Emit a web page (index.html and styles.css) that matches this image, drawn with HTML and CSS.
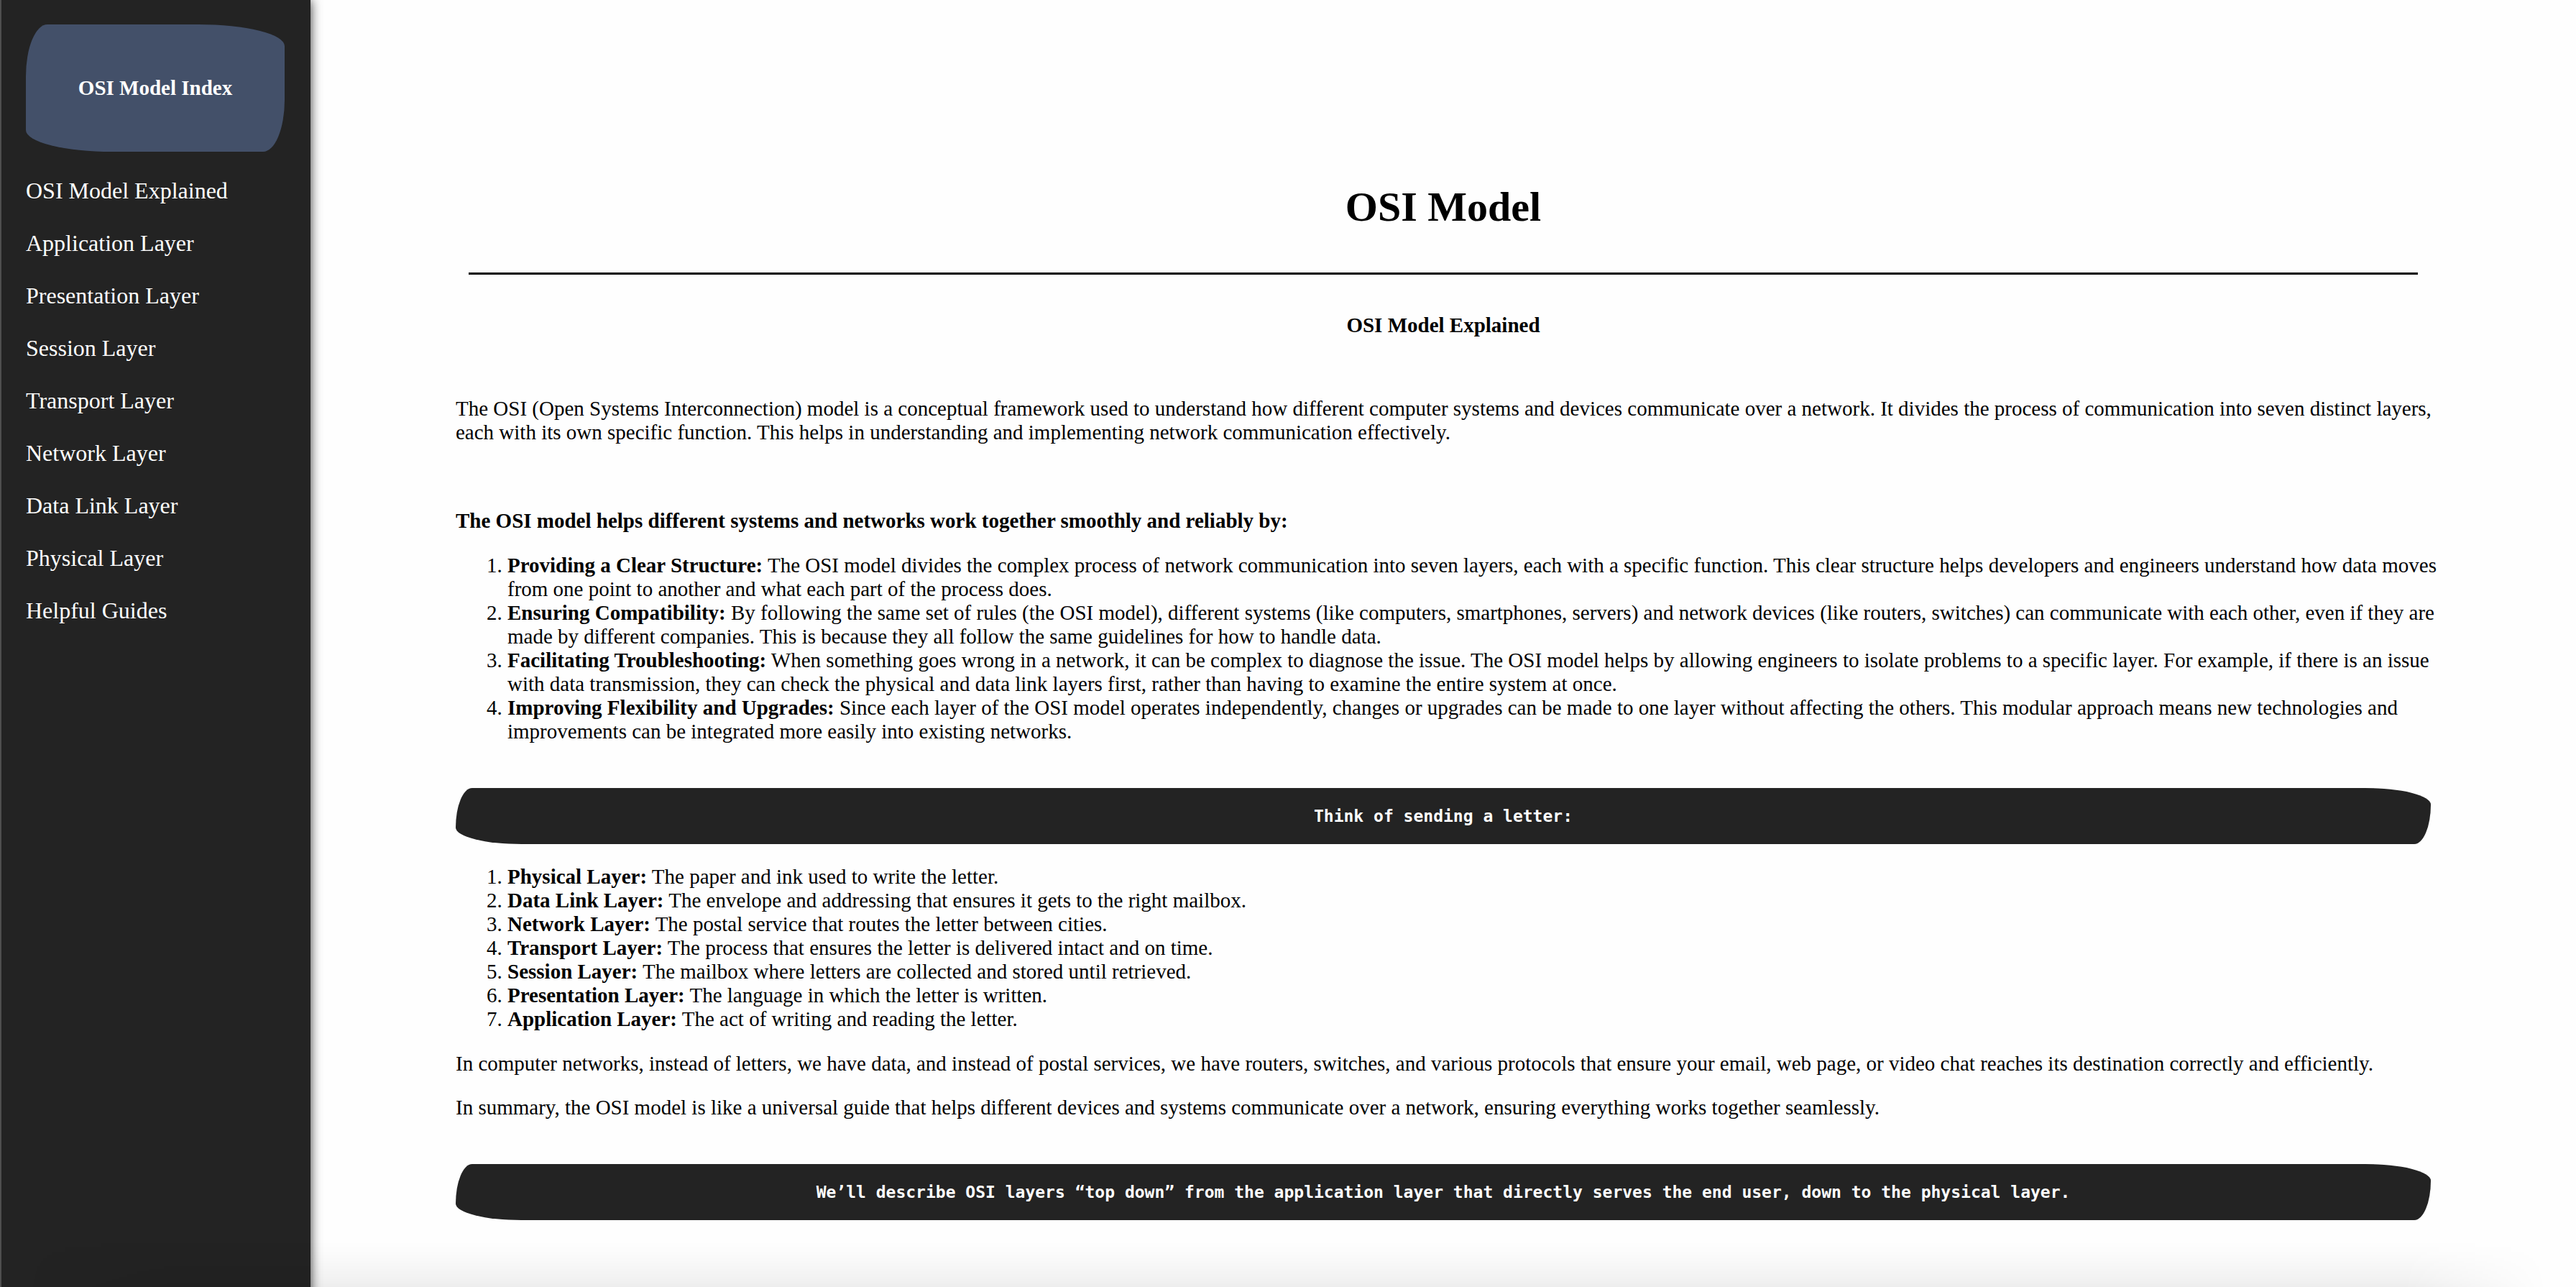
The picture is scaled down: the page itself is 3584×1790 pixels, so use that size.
FILE: index.html
```html
<!DOCTYPE html>
<html lang="en">
<head>
<meta charset="utf-8">
<meta name="viewport" content="width=device-width, initial-scale=1">
<title>OSI Model</title>
<link rel="stylesheet" href="styles.css">
</head>
<body>
<div class="page">
  <aside class="sidebar">
    <h2 class="sidebar-title blob">OSI Model Index</h2>
    <nav class="sidebar-nav" aria-label="OSI Model Index">
      <a href="#explained">OSI Model Explained</a>
      <a href="#application">Application Layer</a>
      <a href="#presentation">Presentation Layer</a>
      <a href="#session">Session Layer</a>
      <a href="#transport">Transport Layer</a>
      <a href="#network">Network Layer</a>
      <a href="#data-link">Data Link Layer</a>
      <a href="#physical">Physical Layer</a>
      <a href="#guides">Helpful Guides</a>
    </nav>
  </aside>
  <main class="content">
    <h1 class="title">OSI Model</h1>
    <hr class="rule">
    <h2 class="subtitle" id="explained">OSI Model Explained</h2>
    <p class="intro">The OSI (Open Systems Interconnection) model is a conceptual framework used to understand how different computer systems and devices communicate over a network. It divides the process of communication into seven distinct layers, each with its own specific function. This helps in understanding and implementing network communication effectively.</p>
    <h3 class="lead">The OSI model helps different systems and networks work together smoothly and reliably by:</h3>
    <ol class="list">
      <li><strong>Providing a Clear Structure:</strong> The OSI model divides the complex process of network communication into seven layers, each with a specific function. This clear structure helps developers and engineers understand how data moves from one point to another and what each part of the process does.</li>
      <li><strong>Ensuring Compatibility:</strong> By following the same set of rules (the OSI model), different systems (like computers, smartphones, servers) and network devices (like routers, switches) can communicate with each other, even if they are made by different companies. This is because they all follow the same guidelines for how to handle data.</li>
      <li><strong>Facilitating Troubleshooting:</strong> When something goes wrong in a network, it can be complex to diagnose the issue. The OSI model helps by allowing engineers to isolate problems to a specific layer. For example, if there is an issue with data transmission, they can check the physical and data link layers first, rather than having to examine the entire system at once.</li>
      <li><strong>Improving Flexibility and Upgrades:</strong> Since each layer of the OSI model operates independently, changes or upgrades can be made to one layer without affecting the others. This modular approach means new technologies and improvements can be integrated more easily into existing networks.</li>
    </ol>
    <h3 class="banner blob">Think of sending a letter:</h3>
    <ol class="list">
      <li><strong>Physical Layer:</strong> The paper and ink used to write the letter.</li>
      <li><strong>Data Link Layer:</strong> The envelope and addressing that ensures it gets to the right mailbox.</li>
      <li><strong>Network Layer:</strong> The postal service that routes the letter between cities.</li>
      <li><strong>Transport Layer:</strong> The process that ensures the letter is delivered intact and on time.</li>
      <li><strong>Session Layer:</strong> The mailbox where letters are collected and stored until retrieved.</li>
      <li><strong>Presentation Layer:</strong> The language in which the letter is written.</li>
      <li><strong>Application Layer:</strong> The act of writing and reading the letter.</li>
    </ol>
    <p class="text">In computer networks, instead of letters, we have data, and instead of postal services, we have routers, switches, and various protocols that ensure your email, web page, or video chat reaches its destination correctly and efficiently.</p>
    <p class="text">In summary, the OSI model is like a universal guide that helps different devices and systems communicate over a network, ensuring everything works together seamlessly.</p>
    <h3 class="banner blob">We’ll describe OSI layers “top down” from the application layer that directly serves the end user, down to the physical layer.</h3>
  </main>
  <div class="bottom-shade" aria-hidden="true"></div>
</div>
</body>
</html>
```

FILE: styles.css
```css
* {
  box-sizing: border-box;
}

html {
  background: #050a0a;
}

body {
  margin: 0;
  color: #000;
  font: 29px/33px "Liberation Serif", "Times New Roman", serif;
}

.page {
  position: relative;
  display: flex;
  min-height: 100vh;
  overflow: hidden;
  background: #fefefe;
  border-radius: 0 0 22px 22px;
}

/* Hand-cut corners shared by the index title and the banners */
.blob {
  border-radius: 30px 120px 30px 120px / 72px 30px 72px 30px;
  color: #fff;
  text-align: center;
}

.sidebar {
  flex: none;
  width: 432px;
  padding: 34px 36px 34px 34px;
  background: #232323;
  border-left: 2px solid #4f4f4f;
  border-bottom: 2px solid #4a4a4a;
  border-bottom-left-radius: 22px;
  box-shadow: 0 0 16px rgba(0, 0, 0, 0.8);
}

.sidebar-title {
  margin: 0 0 18px;
  padding: 72px 0;
  background: #435069;
  font-size: 29px;
}

.sidebar-nav {
  display: flex;
  flex-direction: column;
}

.sidebar-nav a {
  padding: 18px 0;
  color: #fff;
  font-size: 32px;
  line-height: 37px;
  text-decoration: none;
}

.content {
  flex: 1;
  min-width: 0;
  padding: 255px 202px 92px;
}

.title {
  margin: 0 0 58px;
  font-size: 58px;
  line-height: 66px;
  text-align: center;
}

.rule {
  height: 3px;
  margin: 0 18px 54px;
  border: 0;
  background: #000;
}

.subtitle {
  margin: 0 0 83px;
  font-size: 29px;
  text-align: center;
}

/* Running text reaches slightly past the banners on the right */
.intro,
.list {
  margin-right: -18px;
}

.intro {
  margin-top: 0;
  margin-bottom: 90px;
}

.lead {
  margin: 0;
  font-size: 29px;
}

.list {
  margin-top: 29px;
  margin-bottom: 29px;
  padding-left: 72px;
}

.text {
  margin: 0 0 28px;
}

.banner {
  margin: 62px 0 29px;
  padding: 25px 0;
  background: #232323;
  font: bold 23px/28px "DejaVu Sans Mono", Menlo, monospace;
}

.bottom-shade {
  position: absolute;
  right: 0;
  bottom: 0;
  left: 0;
  height: 92px;
  background: linear-gradient(to top, rgba(0, 0, 0, 0.12), rgba(0, 0, 0, 0.05) 40%, rgba(0, 0, 0, 0.01) 80%, transparent);
  -webkit-mask-image: linear-gradient(to right, transparent 40px, #000 240px, #000 calc(100% - 240px), transparent calc(100% - 40px));
  mask-image: linear-gradient(to right, transparent 40px, #000 240px, #000 calc(100% - 240px), transparent calc(100% - 40px));
  pointer-events: none;
}
```
